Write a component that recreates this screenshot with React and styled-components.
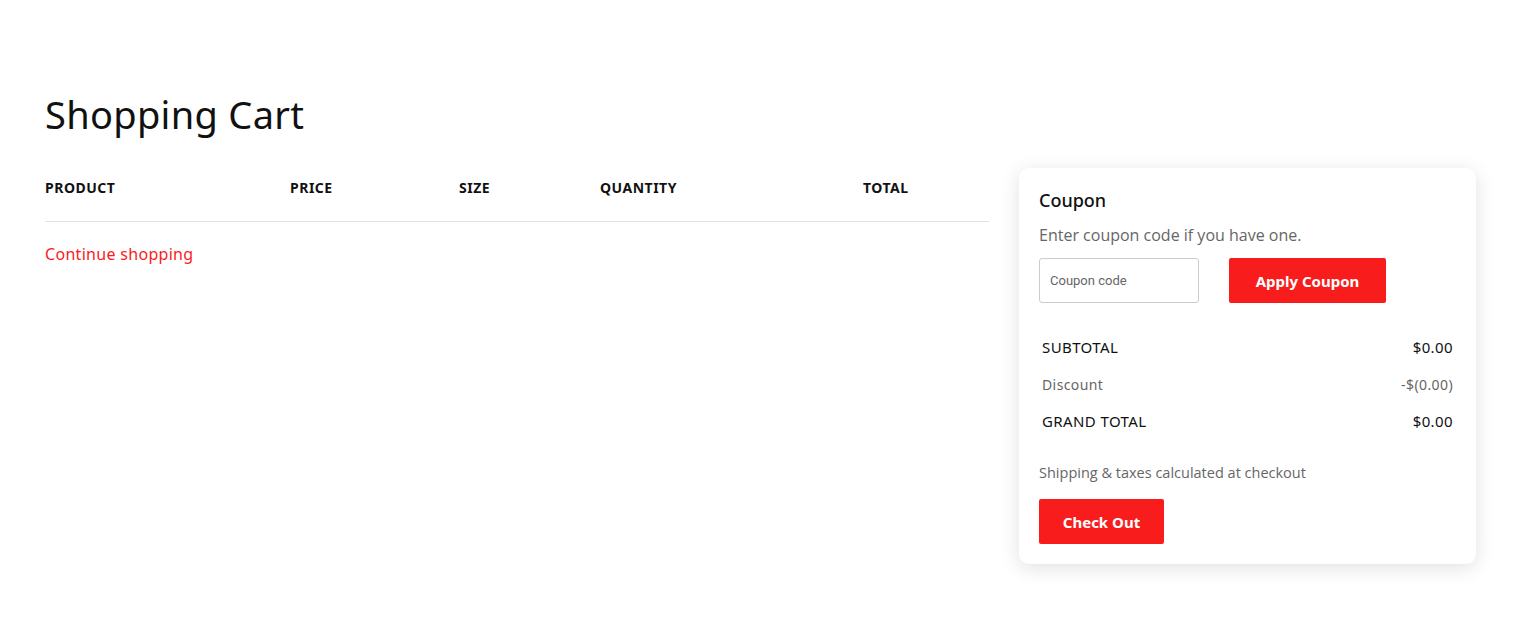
import React from "react";
import styled, { createGlobalStyle } from "styled-components";

const RED = "#f91c1c";
const HEAD = "'Noto Sans', 'Lato', sans-serif";
const BODY = "'Open Sans', sans-serif";

const GlobalStyle = createGlobalStyle`
  body {
    margin: 0;
    background: #fff;
    font-family: ${HEAD};
    color: #111;
  }
`;

function App() {
  return (
    <>
      <GlobalStyle />
      <Page>
        <Title>Shopping Cart</Title>
        <Layout>
          <CartSide>
            <HeaderRow>
              <Col>PRODUCT</Col>
              <Col>PRICE</Col>
              <Col>SIZE</Col>
              <Col>QUANTITY</Col>
              <Col>TOTAL</Col>
            </HeaderRow>
            <ContinueLink href="#">Continue shopping</ContinueLink>
          </CartSide>
          <Card>
            <CardTitle>Coupon</CardTitle>
            <Muted>Enter coupon code if you have one.</Muted>
            <CouponRow>
              <CouponInput placeholder="Coupon code" />
              <RedButton $width="157px">Apply Coupon</RedButton>
            </CouponRow>
            <Totals>
              <TotalRow>
                <span>SUBTOTAL</span>
                <span>$0.00</span>
              </TotalRow>
              <TotalRow $muted>
                <span>Discount</span>
                <span>-$(0.00)</span>
              </TotalRow>
              <TotalRow>
                <span>GRAND TOTAL</span>
                <span>$0.00</span>
              </TotalRow>
            </Totals>
            <Note>Shipping &amp; taxes calculated at checkout</Note>
            <RedButton $width="125px">Check Out</RedButton>
          </Card>
        </Layout>
      </Page>
    </>
  );
}

const Page = styled.div`
  padding: 88px 49px 40px 45px;
`;

const Title = styled.h1`
  margin: 0;
  font-size: 38px;
  font-weight: 400;
  letter-spacing: 0.3px;
`;

const Layout = styled.div`
  display: flex;
  align-items: flex-start;
  gap: 30px;
  margin-top: 11px;
`;

const CartSide = styled.div`
  flex: 0 0 944px;
  padding-top: 27px;
`;

const HeaderRow = styled.div`
  display: grid;
  grid-template-columns: 245px 169px 141px 263px 1fr;
  padding-bottom: 24px;
  border-bottom: 1px solid #e2e2e2;
`;

const Col = styled.div`
  font-size: 14px;
  font-weight: 700;
  letter-spacing: 0.5px;
`;

const ContinueLink = styled.a`
  display: inline-block;
  margin-top: 21px;
  color: ${RED};
  font-size: 16px;
  text-decoration: none;
  letter-spacing: 0.3px;
`;

const Card = styled.div`
  width: 457px;
  margin-top: 17px;
  box-sizing: border-box;
  padding: 20px;
  border-radius: 10px;
  background: #fff;
  box-shadow: 0 4px 20px rgba(0, 0, 0, 0.12);
`;

const CardTitle = styled.h3`
  margin: 0;
  font-size: 18px;
  font-weight: 500;
`;

const Muted = styled.p`
  margin: 12px 0 0;
  font-family: ${BODY};
  font-size: 16px;
  color: #666;
`;

const CouponRow = styled.div`
  display: flex;
  gap: 30px;
  margin-top: 12px;
`;

const CouponInput = styled.input`
  width: 160px;
  height: 45px;
  box-sizing: border-box;
  border: 1px solid #ccc;
  border-radius: 3px;
  padding: 0 10px;
  font-family: "Roboto", sans-serif;
  font-size: 13px;
  &::placeholder {
    color: #666;
  }
`;

const RedButton = styled.button`
  width: ${(p) => p.$width};
  height: 45px;
  border: none;
  border-radius: 2px;
  background: ${RED};
  color: #fff;
  font-family: ${HEAD};
  font-size: 15px;
  font-weight: 700;
  cursor: pointer;
`;

const Totals = styled.div`
  display: flex;
  flex-direction: column;
  gap: 16px;
  margin-top: 34px;
  padding: 0 3px;
`;

const TotalRow = styled.div`
  display: flex;
  justify-content: space-between;
  font-size: ${(p) => (p.$muted ? "14px" : "15px")};
  color: ${(p) => (p.$muted ? "#666" : "#111")};
  letter-spacing: 0.4px;
  line-height: 21px;
`;

const Note = styled.p`
  margin: 31px 0 17px;
  font-family: ${BODY};
  font-size: 14.5px;
  color: #666;
`;

export default App;
